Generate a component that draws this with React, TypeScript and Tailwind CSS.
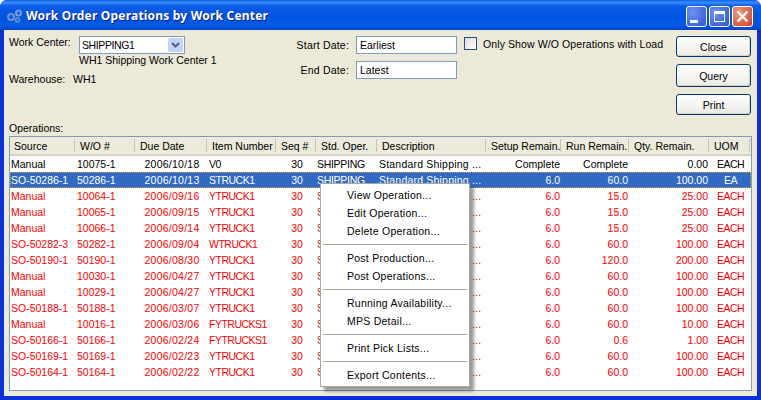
import React from "react";

const cols = "grid grid-cols-[66px_60px_72px_69px_40px_61px_109px_75px_68px_80px_41px]";

const headers = ["Source", "W/O #", "Due Date", "Item Number", "Seq #", "Std. Oper.", "Description", "Setup Remain.", "Run Remain.", "Qty. Remain.", "UOM"];

const rows = [
  ["Manual", "10075-1", "2006/10/18", "V0", "Complete", "Complete", "0.00", "EACH"],
  ["SO-50286-1", "50286-1", "2006/10/13", "STRUCK1", "6.0", "60.0", "100.00", "EA"],
  ["Manual", "10064-1", "2006/09/16", "YTRUCK1", "6.0", "15.0", "25.00", "EACH"],
  ["Manual", "10065-1", "2006/09/15", "YTRUCK1", "6.0", "15.0", "25.00", "EACH"],
  ["Manual", "10066-1", "2006/09/14", "YTRUCK1", "6.0", "15.0", "25.00", "EACH"],
  ["SO-50282-3", "50282-1", "2006/09/04", "WTRUCK1", "6.0", "60.0", "100.00", "EACH"],
  ["SO-50190-1", "50190-1", "2006/08/30", "YTRUCK1", "6.0", "120.0", "200.00", "EACH"],
  ["Manual", "10030-1", "2006/04/27", "YTRUCK1", "6.0", "60.0", "100.00", "EACH"],
  ["Manual", "10029-1", "2006/04/27", "YTRUCK1", "6.0", "60.0", "100.00", "EACH"],
  ["SO-50188-1", "50188-1", "2006/03/07", "YTRUCK1", "6.0", "60.0", "100.00", "EACH"],
  ["Manual", "10016-1", "2006/03/06", "FYTRUCKS1", "6.0", "60.0", "10.00", "EACH"],
  ["SO-50166-1", "50166-1", "2006/02/24", "FYTRUCKS1", "6.0", "0.6", "1.00", "EACH"],
  ["SO-50169-1", "50169-1", "2006/02/23", "YTRUCK1", "6.0", "60.0", "100.00", "EACH"],
  ["SO-50164-1", "50164-1", "2006/02/22", "YTRUCK1", "6.0", "60.0", "100.00", "EACH"],
];

const menu = [
  ["View Operation...", "Edit Operation...", "Delete Operation..."],
  ["Post Production...", "Post Operations..."],
  ["Running Availability...", "MPS Detail..."],
  ["Print Pick Lists..."],
  ["Export Contents..."],
];

function AppIcon() {
  return (
    <svg width="16" height="14" viewBox="0 0 16 14" fill="none" strokeWidth="2">
      <circle cx="5" cy="8" r="3" stroke="#6f93d6" />
      <circle cx="12.5" cy="4" r="2.5" stroke="#7c9bd8" />
      <circle cx="11.5" cy="11" r="2" stroke="#5f86d0" />
    </svg>
  );
}

function Button({ label, className }: { label: string; className: string }) {
  return (
    <div className={`flex items-center justify-center rounded-[3px] border border-[#003c74] bg-gradient-to-b from-white to-[#ecebe5] shadow-[inset_-1px_-1px_0_#d6d0c5] ${className}`}>
      {label}
    </div>
  );
}

function DateField({ label, value }: { label: string; value: string }) {
  return (
    <div className="flex items-center">
      <span className="w-[60px] text-right tracking-[0.2px]">{label}</span>
      <div className="ml-[7px] flex h-[18px] w-[101px] items-center border border-[#7f9db9] bg-white pl-[3px]">{value}</div>
    </div>
  );
}

function WindowButton({ className, children }: { className: string; children: React.ReactNode }) {
  return (
    <div className={`flex h-[21px] w-[21px] items-center justify-center rounded-[3px] border border-white ${className}`}>
      {children}
    </div>
  );
}

export default function App() {
  return (
    <div className="flex h-[400px] w-[761px] flex-col overflow-hidden rounded-t-[7px] bg-[#0831d9] font-['Liberation_Sans',sans-serif] text-[10.5px] leading-[14px] text-black">
      {/* title bar */}
      <div className="flex h-[30px] items-center bg-[linear-gradient(180deg,#0a5fe8_0%,#3a8cf5_8%,#0b5ce6_20%,#0054e0_55%,#0259e6_85%,#0042c4_100%)] pl-[6px] pr-[8px] pt-[2px]">
        <AppIcon />
        <span className="ml-[4px] font-['Noto_Sans',sans-serif] text-[12px] font-bold tracking-[0.2px] text-white [text-shadow:1px_1px_0_#0f1e8c]">
          Work Order Operations by Work Center
        </span>
        <div className="ml-auto flex gap-[2px]">
          <WindowButton className="bg-[radial-gradient(circle_at_30%_30%,#6f92ee,#2a55d8)]">
            <div className="mt-[10px] mr-[5px] h-[3px] w-[8px] bg-white" />
          </WindowButton>
          <WindowButton className="bg-[radial-gradient(circle_at_30%_30%,#6f92ee,#2a55d8)]">
            <div className="h-[11px] w-[11px] border border-t-[3px] border-white" />
          </WindowButton>
          <WindowButton className="bg-[radial-gradient(circle_at_30%_30%,#ec9a7c,#d2401c)]">
            <svg width="13" height="13" viewBox="0 0 13 13" stroke="white" strokeWidth="2.4">
              <path d="M1.5 1.5 L11.5 11.5 M11.5 1.5 L1.5 11.5" />
            </svg>
          </WindowButton>
        </div>
      </div>

      {/* client area */}
      <div className="relative mx-[4px] mb-[4px] flex flex-1 flex-col bg-[#ece9d8] px-[5px]">
        <div className="flex h-[91px] pt-[6px]">
          <div className="w-[280px]">
            <div className="flex">
              <span className="-mt-[1px] w-[70px]">Work Center:</span>
              <div>
                <div className="flex h-[18px] w-[106px] items-center justify-between border border-[#7f9db9] bg-white pl-[2px] pr-[1px]">
                  <span className="tracking-[-0.4px]">SHIPPING1</span>
                  <div className="flex h-[14px] w-[15px] items-center justify-center rounded-[2px] bg-[#c1d2fb]">
                    <svg width="9" height="7" viewBox="0 0 9 7" fill="none" stroke="#4d6185" strokeWidth="2">
                      <path d="M1 1 L4.5 4.5 L8 1" />
                    </svg>
                  </div>
                </div>
                <div className="-mt-[1px]">WH1 Shipping Work Center 1</div>
              </div>
            </div>
            <div className="mt-[5px] flex">
              <span className="w-[64px]">Warehouse:</span>
              <span>WH1</span>
            </div>
          </div>
          <div className="flex flex-col gap-[7px]">
            <DateField label="Start Date:" value="Earliest" />
            <DateField label="End Date:" value="Latest" />
          </div>
          <div className="ml-[7px] flex h-[15px] items-center whitespace-nowrap">
            <div className="h-[13px] w-[13px] border border-[#1c5180] bg-gradient-to-br from-[#dcdcd7] to-white" />
            <span className="ml-[6px] tracking-[0.1px]">Only Show W/O Operations with Load</span>
          </div>
          <div className="ml-auto mr-[1px] flex flex-col">
            <Button label="Close" className="h-[21px] w-[75px]" />
            <Button label="Query" className="mt-[7px] h-[23px] w-[75px]" />
            <Button label="Print" className="mt-[7px] h-[21px] w-[75px]" />
          </div>
        </div>
        <div className="h-[15px]">Operations:</div>

        {/* table */}
        <div className="h-[255px] border border-[#7f9db9] bg-white">
          <div className={`${cols} h-[19px] bg-[#ebeadb] shadow-[inset_0_-2px_0_#d6d2c2]`}>
            {headers.map((h) => (
              <div key={h} className="flex items-center justify-between overflow-hidden whitespace-nowrap pb-[2px] pl-[4px]">
                <span>{h}</span>
                <span className="mr-[1px] h-[13px] w-[1px] shrink-0 bg-[#c7c5b2]" />
              </div>
            ))}
          </div>
          {rows.map((r, i) => {
            const selected = i === 1;
            const color = selected ? "bg-[#316ac5] text-white outline-1 -outline-offset-1 outline-dotted outline-[#c9a050]" : i === 0 ? "text-black" : "text-[#ff0000]";
            return (
              <div key={r[0] + r[1]} className={`${cols} h-[16px] items-center whitespace-nowrap ${color}`}>
                <span className="pl-[1px]">{r[0]}</span>
                <span className="pl-[1px]">{r[1]}</span>
                <span className="text-center tracking-[0.25px]">{r[2]}</span>
                <span className="pl-[1px] tracking-[-0.5px]">{r[3]}</span>
                <span className="text-center">30</span>
                <span className="tracking-[-0.3px]">SHIPPING</span>
                <span className="pl-[1px] tracking-[0.2px]">Standard Shipping ...</span>
                <span className="pr-[2px] text-right">{r[4]}</span>
                <span className="pr-[2px] text-right">{r[5]}</span>
                <span className="pr-[2px] text-right">{r[6]}</span>
                <span className="text-center tracking-[-0.5px]">{r[7]}</span>
              </div>
            );
          })}
        </div>

        {/* context menu */}
        <div className="absolute left-[316px] top-[153px] w-[150px] border border-[#aca899] bg-white py-[2px] tracking-[0.25px] shadow-[4px_4px_3px_rgba(0,0,0,0.4)]">
          {menu.map((group, g) => (
            <div key={g}>
              {g > 0 && <div className="mx-[2px] my-[4px] h-[1px] bg-[#aca899]" />}
              {group.map((item) => (
                <div key={item} className="flex h-[18px] items-center pl-[26px]">{item}</div>
              ))}
            </div>
          ))}
        </div>
      </div>
    </div>
  );
}
